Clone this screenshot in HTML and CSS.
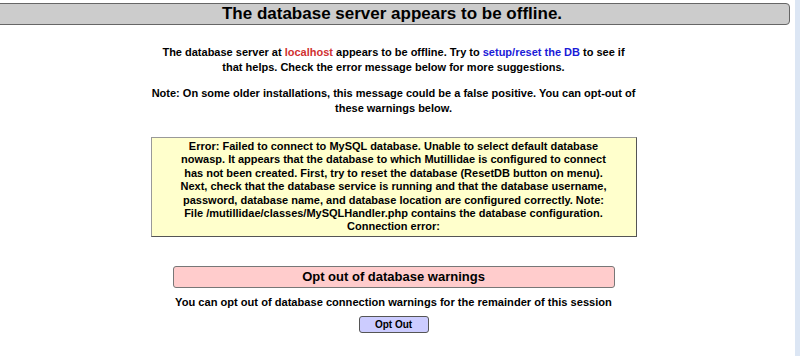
FILE: index.html
```html
<!DOCTYPE html>
<html>
<head>
<meta charset="utf-8">
<link rel="stylesheet" href="styles.css">
</head>
<body>
<div class="page">
  <main class="main">
    <h1 class="title">The database server appears to be offline.</h1>
    <p class="intro">The database server at <span class="host">localhost</span> appears to be offline. Try to <a class="link" href="#">setup/reset the DB</a> to see if<br>that helps. Check the error message below for more suggestions.</p>
    <p class="intro">Note: On some older installations, this message could be a false positive. You can opt-out of these warnings below.</p>
    <div class="error">Error: Failed to connect to MySQL database. Unable to select default database nowasp. It appears that the database to which Mutillidae is configured to connect has not been created. First, try to reset the database (ResetDB button on menu). Next, check that the database service is running and that the database username, password, database name, and database location are configured correctly. Note: File /mutillidae/classes/MySQLHandler.php contains the database configuration. Connection error:</div>
    <div class="optout-title">Opt out of database warnings</div>
    <p class="optout-text">You can opt out of database connection warnings for the remainder of this session</p>
    <div class="btn-row"><button class="btn">Opt Out</button></div>
  </main>
  <div class="strip"></div>
</div>
</body>
</html>
```

FILE: styles.css
```css
html, body {
  margin: 0;
  padding: 0;
  background: #fff;
}
body {
  font-family: "Liberation Sans", Arial, sans-serif;
  font-weight: bold;
  color: #000;
  font-size: 11px;
}
.page {
  display: flex;
  height: 356px;
  overflow: hidden;
}
.main {
  flex: 1;
  display: flex;
  flex-direction: column;
  align-items: center;
  padding-right: 8px;
  overflow: hidden;
}
.strip {
  width: 5px;
  background: #dce6f4;
}
.title {
  align-self: stretch;
  margin: 3px -3px 0 -6px;
  height: 20px;
  line-height: 20px;
  background: #cccccc;
  border: 1px solid #666;
  border-radius: 4px;
  text-align: center;
  font-size: 17px;
  font-weight: bold;
}
.intro {
  width: 492px;
  text-align: center;
  line-height: 15px;
  margin: 20px 0 0 0;
}
.intro + .intro {
  margin-top: 11px;
}
.host { color: #d03030; }
.link { color: #1a1ad8; text-decoration: none; }
.error {
  margin-top: 21px;
  width: 436px;
  padding: 2px 24px 2px;
  background: #ffffcc;
  border: 1px solid #555;
  border-top-color: #999;
  border-left-color: #999;
  text-align: center;
  line-height: 13.4px;
}
.optout-title {
  margin-top: 29px;
  width: 440px;
  height: 20px;
  line-height: 20px;
  background: #ffcccc;
  border: 1px solid #777;
  border-radius: 3px;
  text-align: center;
  font-size: 13px;
}
.optout-text {
  margin: 7px 0 0 0;
  line-height: 14px;
  font-size: 11.1px;
}
.btn-row {
  margin-top: 7px;
}
.btn {
  width: 70px;
  height: 17px;
  padding: 0;
  background: #ccccff;
  border: 1px solid #555;
  border-radius: 3px;
  font-family: "Liberation Sans", Arial, sans-serif;
  font-weight: bold;
  font-size: 10px;
  color: #000;
}
```
